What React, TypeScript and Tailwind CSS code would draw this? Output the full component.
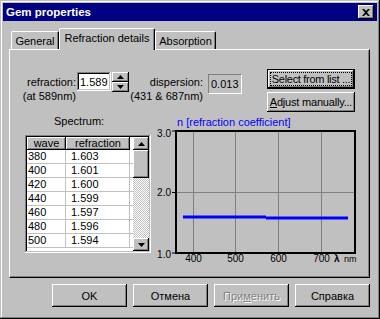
import React from "react";

const FONT = "font-['Liberation_Sans',Arial,sans-serif]";
const RAISED =
  "shadow-[inset_-1px_-1px_0_#000,inset_1px_1px_0_#fff,inset_-2px_-2px_0_#808080,inset_2px_2px_0_#c0c0c0]";
const SUNKEN =
  "shadow-[inset_-1px_-1px_0_#fff,inset_1px_1px_0_#808080,inset_-2px_-2px_0_#c0c0c0,inset_2px_2px_0_#000]";

const rows = [
  ["380", "1.603"],
  ["400", "1.601"],
  ["420", "1.600"],
  ["440", "1.599"],
  ["460", "1.597"],
  ["480", "1.596"],
  ["500", "1.594"],
];

const Arrow = ({ up }: { up?: boolean }) => (
  <svg width="7" height="4" viewBox="0 0 7 4">
    <path d={up ? "M3.5 0 L7 4 L0 4 Z" : "M0 0 L7 0 L3.5 4 Z"} fill="#000" />
  </svg>
);

const DlgButton = ({ children, disabled }: { children: React.ReactNode; disabled?: boolean }) => (
  <div
    className={`w-[75px] h-[23px] flex items-center justify-center bg-[#c0c0c0] ${RAISED} ${
      disabled ? "text-[#808080] [text-shadow:1px_1px_0_#fff]" : "text-black"
    }`}
  >
    {children}
  </div>
);

const Chart = () => {
  // plot frame: n=1 at y 124, n=3 at y 2 (61px per unit); 400nm at x 41.5, 42.67px per 100nm
  const xs = [41.5, 83.5, 126.5, 169.5];
  return (
    <svg width="209" height="139" viewBox="0 0 209 139" className="block">
      {xs.map((x) => (
        <line key={x} x1={x} y1={3} x2={x} y2={124} stroke="#808080" strokeWidth={1} />
      ))}
      <line x1={25} y1={63.5} x2={202} y2={63.5} stroke="#808080" strokeWidth={1} />
      <rect x={24} y={2} width={179} height={122} fill="none" stroke="#000" strokeWidth={2} />
      {[2, 63.5, 124].map((y) => (
        <line key={y} x1={20} y1={y} x2={24} y2={y} stroke="#000" strokeWidth={1} />
      ))}
      <line x1={31} y1={88} x2={114} y2={88} stroke="#0000ff" strokeWidth={3} />
      <line x1={114} y1={89} x2={196} y2={89} stroke="#0000ff" strokeWidth={3} />
      <g fontFamily="'Liberation Sans', Arial, sans-serif" fontSize="10" fill="#000">
        <text x={19} y={7.5} textAnchor="end">3.0</text>
        <text x={19} y={67} textAnchor="end">2.0</text>
        <text x={19} y={128.5} textAnchor="end">1.0</text>
        {["400", "500", "600", "700"].map((t, i) => (
          <text key={t} x={xs[i]} y={133} textAnchor="middle">
            {t}
          </text>
        ))}
        <text x={182} y={133} fontWeight="bold">λ</text>
        <text x={192} y={133} fontSize="9">nm</text>
      </g>
    </svg>
  );
};

export default function App() {
  return (
    <div
      className={`${FONT} text-[11px] leading-[14px] text-black w-[380px] h-[319px] bg-[#c0c0c0] p-[3px] overflow-hidden shadow-[inset_-1px_-1px_0_#000,inset_1px_1px_0_#c0c0c0,inset_-2px_-2px_0_#808080,inset_2px_2px_0_#fff]`}
    >
      {/* title bar */}
      <div className="h-[18px] bg-[#000080] flex items-center justify-between pl-[3px] pr-[3px]">
        <span className="text-white font-bold text-[11.5px]">Gem properties</span>
        <div className={`w-[16px] h-[14px] bg-[#c0c0c0] flex items-center justify-center ${RAISED}`}>
          <svg width="8" height="7" viewBox="0 0 8 7">
            <path d="M0 0h2l2 2 2-2h2L5 3.5 8 7H6L4 5 2 7H0l3-3.5z" fill="#000" />
          </svg>
        </div>
      </div>

      {/* tabs */}
      <div className="mt-[7px] ml-[8px] h-[21px] flex items-end">
        <div className="w-[48px] h-[18px] flex items-center justify-center border-t border-l border-white border-r border-r-black rounded-tl-[2px] shadow-[inset_-1px_0_0_#808080]">
          General
        </div>
        <div className="relative z-10 -mb-px w-[96px] h-[22px] pb-[3px] flex items-center justify-center bg-[#c0c0c0] border-t border-l border-white border-r border-r-black rounded-t-[2px] shadow-[inset_-1px_0_0_#808080]">
          Refraction details
        </div>
        <div className="w-[61px] h-[18px] flex items-center justify-center border-t border-l border-white border-r border-r-black rounded-tr-[2px] shadow-[inset_-1px_0_0_#808080]">
          Absorption
        </div>
      </div>

      {/* panel */}
      <div className="ml-[6px] w-[361px] h-[229px] border-t border-l border-white border-r border-b border-r-black border-b-black shadow-[inset_-1px_-1px_0_#808080]">
        <div className="mt-[19px] flex items-start">
          <div className="w-[66px] mt-[6px] text-right">
            <div>refraction:</div>
            <div>(at 589nm)</div>
          </div>
          <div className={`ml-[1px] mt-[3px] w-[34px] h-[19px] bg-white flex items-center pl-[3px] ${SUNKEN}`}>
            1.589
          </div>
          <div className="ml-[1px] mt-[3px] w-[17px] flex flex-col">
            <div className={`h-[10px] flex items-center justify-center ${RAISED}`}>
              <Arrow up />
            </div>
            <div className={`h-[10px] flex items-center justify-center ${RAISED}`}>
              <Arrow />
            </div>
          </div>
          <div className="w-[74px] mt-[6px] text-right">
            <div>dispersion:</div>
            <div>(431 &amp; 687nm)</div>
          </div>
          <div className="ml-[5px] mt-[5px] w-[34px] h-[20px] flex items-center pl-[2px] border-t border-l border-[#808080] border-r border-b border-r-white border-b-white">
            0.013
          </div>
          <div className="ml-[25px] w-[88px] flex flex-col gap-[3px]">
            <div className="h-[20px] border border-black">
              <div className={`h-full p-[2px] ${RAISED}`}>
                <div className="h-full border border-dotted border-black flex items-center justify-center whitespace-nowrap tracking-[-0.3px]">
                  Select from list ...
                </div>
              </div>
            </div>
            <div className={`h-[20px] flex items-center justify-center whitespace-nowrap tracking-[-0.2px] ${RAISED}`}>
              <span>
                <span className="underline">A</span>djust manually...
              </span>
            </div>
          </div>
        </div>

        <div className="mt-[2px] flex items-start">
          <div className="ml-[15px] w-[126px]">
            <div className="pl-[29px]">Spectrum:</div>
            <div className={`mt-[7px] h-[118px] p-[2px] bg-white flex ${SUNKEN}`}>
              <div className="flex-1 overflow-hidden">
                <div className="flex h-[13px] text-center">
                  <div className={`w-[39px] bg-[#c0c0c0] leading-[13px] ${RAISED}`}>wave</div>
                  <div className={`w-[64px] bg-[#c0c0c0] leading-[13px] ${RAISED}`}>refraction</div>
                </div>
                {rows.map(([w, n]) => (
                  <div key={w} className="flex h-[14px] border-b border-[#c0c0c0] leading-[13px]">
                    <div className="w-[39px] pl-[1px] border-r border-[#c0c0c0]">{w}</div>
                    <div className="w-[64px] pl-[5px] border-r border-[#c0c0c0]">{n}</div>
                  </div>
                ))}
              </div>
              <div className="w-[16px] flex flex-col">
                <div className={`h-[13px] bg-[#c0c0c0] flex items-center justify-center ${RAISED}`}>
                  <Arrow up />
                </div>
                <div className={`h-[28px] bg-[#c0c0c0] ${RAISED}`} />
                <div className="flex-1 bg-[repeating-conic-gradient(#c0c0c0_0%_25%,#fff_0%_50%)] [background-size:2px_2px]" />
                <div className={`h-[13px] bg-[#c0c0c0] flex items-center justify-center ${RAISED}`}>
                  <Arrow />
                </div>
              </div>
            </div>
          </div>
          <div className="ml-[1px] mt-[1px]">
            <div className="pl-[25px] text-[#0000ff]">n [refraction coefficient]</div>
            <Chart />
          </div>
        </div>
      </div>

      {/* dialog buttons */}
      <div className="mt-[6px] w-[367px] flex justify-end gap-[6px]">
        <DlgButton>OK</DlgButton>
        <DlgButton>Отмена</DlgButton>
        <DlgButton disabled>
          <span>
            При<span className="underline">м</span>енить
          </span>
        </DlgButton>
        <DlgButton>Справка</DlgButton>
      </div>
    </div>
  );
}
